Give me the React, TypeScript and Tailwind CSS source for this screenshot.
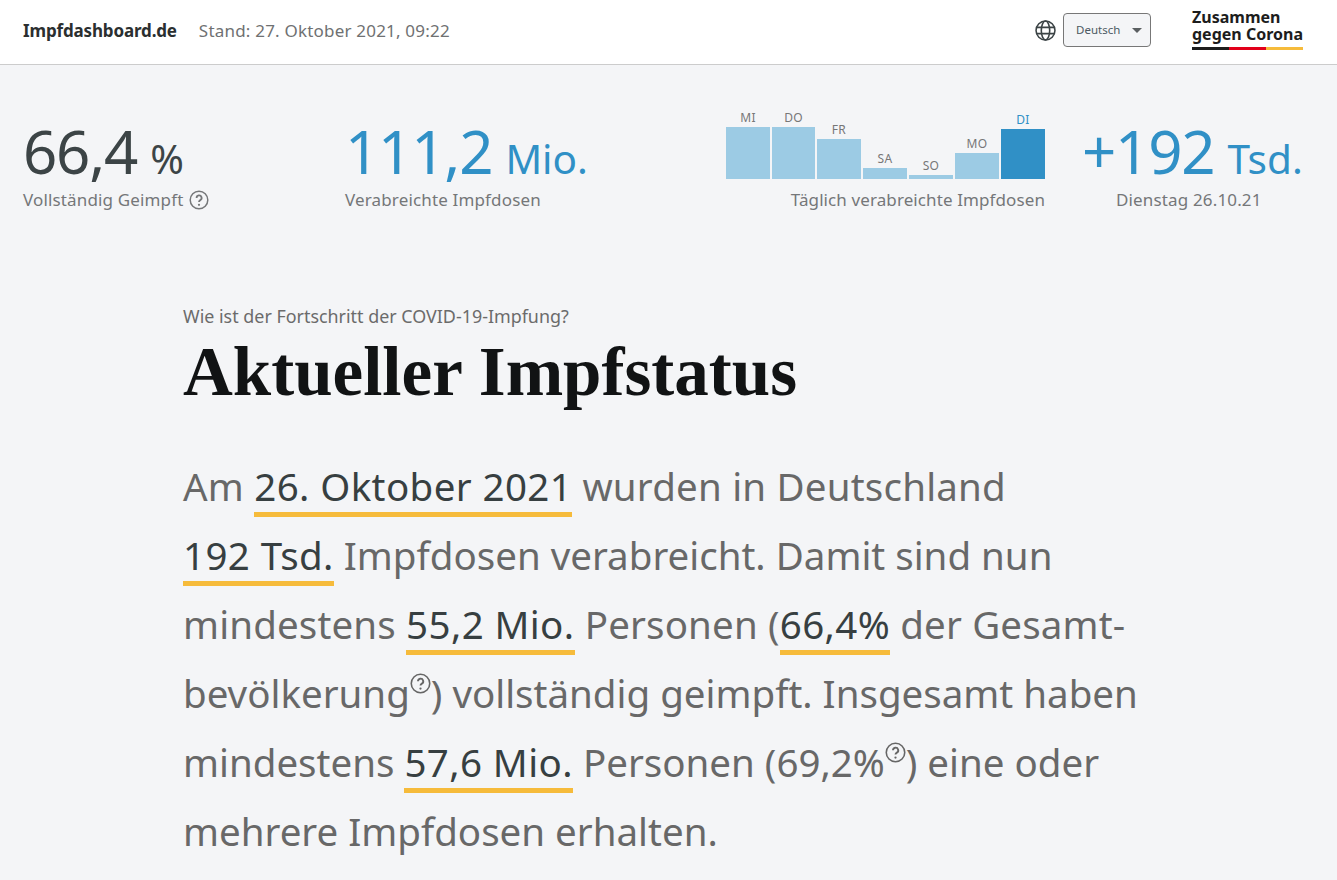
import React from "react";

const sans = "font-['Noto_Sans','Open_Sans',sans-serif]";

const days = [
  { label: "MI", height: "h-[52px]", width: "w-[44px]" },
  { label: "DO", height: "h-[52px]", width: "w-[43px]" },
  { label: "FR", height: "h-[40px]", width: "w-[44px]" },
  { label: "SA", height: "h-[11px]", width: "w-[44px]" },
  { label: "SO", height: "h-[4px]", width: "w-[44px]" },
  { label: "MO", height: "h-[26px]", width: "w-[44px]" },
  { label: "DI", height: "h-[50px]", width: "w-[44px]", current: true },
];

const Help = ({ className }: { className: string }) => (
  <svg viewBox="0 0 20 20" className={className} fill="none" stroke="currentColor">
    <circle cx="10" cy="10" r="8.8" strokeWidth="1.5" />
    <path d="M7.6 7.9a2.5 2.5 0 1 1 3.7 2.2c-.9.5-1.3 1-1.3 1.9" strokeWidth="1.8" />
    <circle cx="10" cy="14.8" r="1.1" fill="currentColor" stroke="none" />
  </svg>
);

const Mark = ({ children }: { children: React.ReactNode }) => (
  <span className="text-[#373f41] tracking-[0.4px] border-b-[5px] border-[#f6bb3b]">{children}</span>
);

const Sup = () => (
  <Help className="inline-block w-[21px] h-[21px] align-[14px] text-[#666]" />
);

const Stat = ({ value, unit, blue }: { value: string; unit: string; blue?: boolean }) => (
  <div className={`whitespace-nowrap pt-[9px] leading-[40px] ${blue ? "text-[#3090c6]" : "text-[#3c4446]"}`}>
    <span className="text-[60px] tracking-[-1.2px]">{value}</span>
    <span className="ml-[13px] text-[40.5px]">{unit}</span>
  </div>
);

export default function App() {
  return (
    <div className={`min-h-screen bg-[#f4f5f7] overflow-hidden ${sans}`}>
      <header className="h-[65px] bg-white border-b border-[#cccccc] flex items-center pl-[23px] pr-[34px] pb-[2px]">
        <span className="text-[17px] font-bold text-[#2b2f30] tracking-[-0.15px]">Impfdashboard.de</span>
        <span className="ml-[22px] text-[17px] text-[#6f7172] tracking-[0.2px]">Stand: 27. Oktober 2021, 09:22</span>
        <svg viewBox="0 0 20 20" className="ml-auto mt-[-2px] w-[21px] h-[21px] text-[#3c4446]" fill="none" stroke="currentColor" strokeWidth="1.5">
          <circle cx="10" cy="10" r="9" />
          <ellipse cx="10" cy="10" rx="4" ry="9" />
          <path d="M1.6 7h16.8M1.6 13h16.8" />
        </svg>
        <div className="ml-[7px] mt-[-2px] w-[88px] h-[34px] rounded-[4px] border border-[#777] bg-[#f4f5f7] flex items-center justify-between pl-[12px] pr-[8px]">
          <span className="text-[11.5px] text-[#4c5a63]">Deutsch</span>
          <span className="w-0 h-0 border-x-[5px] border-x-transparent border-t-[5px] border-t-[#5a5f61]" />
        </div>
        <div className="ml-[41px] w-[111px] mt-[-3px]">
          <div className="text-[16px] leading-[17px] font-bold text-[#1d1d1d] whitespace-nowrap">
            Zusammen
            <br />
            gegen Corona
          </div>
          <div className="flex h-[3px] mt-[4px]">
            <div className="flex-1 bg-[#1d1d1d]" />
            <div className="flex-1 bg-[#e2001a]" />
            <div className="flex-1 bg-[#f6bb3b]" />
          </div>
        </div>
      </header>

      <section className="flex pl-[23px] pt-[57px]">
        <div className="w-[322px] shrink-0">
          <Stat value="66,4" unit="%" />
          <div className="text-[17px] leading-[24px] tracking-[0.15px] text-[#757779] flex items-center">
            Vollständig Geimpft
            <Help className="ml-[5px] w-[20px] h-[20px]" />
          </div>
        </div>
        <div className="w-[381px] shrink-0">
          <Stat value="111,2" unit="Mio." blue />
          <div className="text-[17px] leading-[24px] tracking-[0.15px] text-[#757779]">Verabreichte Impfdosen</div>
        </div>
        <div className="w-[319px] shrink-0 mt-[-12px] flex flex-col items-end">
          <div className="flex items-end gap-[2px] h-[69px]">
            {days.map((day) => (
              <div key={day.label} className={`${day.width} flex flex-col items-center`}>
                <span className={`text-[12px] leading-[19px] tracking-[0.3px] ${day.current ? "text-[#3090c6]" : "text-[#777]"}`}>
                  {day.label}
                </span>
                <div className={`w-full ${day.height} ${day.current ? "bg-[#3090c6]" : "bg-[#9ccbe4]"}`} />
              </div>
            ))}
          </div>
          <div className="text-[17px] leading-[24px] mt-[9px] tracking-[0.1px] text-[#757779] whitespace-nowrap">
            Täglich verabreichte Impfdosen
          </div>
        </div>
        <div className="ml-[37px] shrink-0 flex flex-col items-start">
          <Stat value="+192" unit="Tsd." blue />
          <div className="ml-[34px] text-[17px] leading-[24px] tracking-[0.15px] text-[#757779]">Dienstag 26.10.21</div>
        </div>
      </section>

      <main className="pl-[183px] pt-[92px]">
        <p className="text-[17.9px] leading-[24px] text-[#6b6b6b]">Wie ist der Fortschritt der COVID-19-Impfung?</p>
        <h1 className="font-['Liberation_Serif',serif] font-bold text-[69px] leading-[76px] text-[#111314] mt-[6px]">
          Aktueller Impfstatus
        </h1>
        <p className="mt-[42px] text-[38.5px] leading-[69px] text-[#686868] whitespace-nowrap">
          <span className="tracking-[0.2px]">
            Am <Mark>26. Oktober 2021</Mark> wurden in Deutschland
          </span>
          <br />
          <Mark>192 Tsd.</Mark> Impfdosen verabreicht. Damit sind nun
          <br />
          <span className="tracking-[0.15px]">
            mindestens <Mark>55,2 Mio.</Mark> Personen (<Mark>66,4%</Mark> der Gesamt-
          </span>
          <br />
          bevölkerung
          <Sup />) vollständig geimpft. Insgesamt haben
          <br />
          mindestens <Mark>57,6 Mio.</Mark> Personen (69,2%
          <Sup />) eine oder
          <br />
          mehrere Impfdosen erhalten.
        </p>
      </main>
    </div>
  );
}
